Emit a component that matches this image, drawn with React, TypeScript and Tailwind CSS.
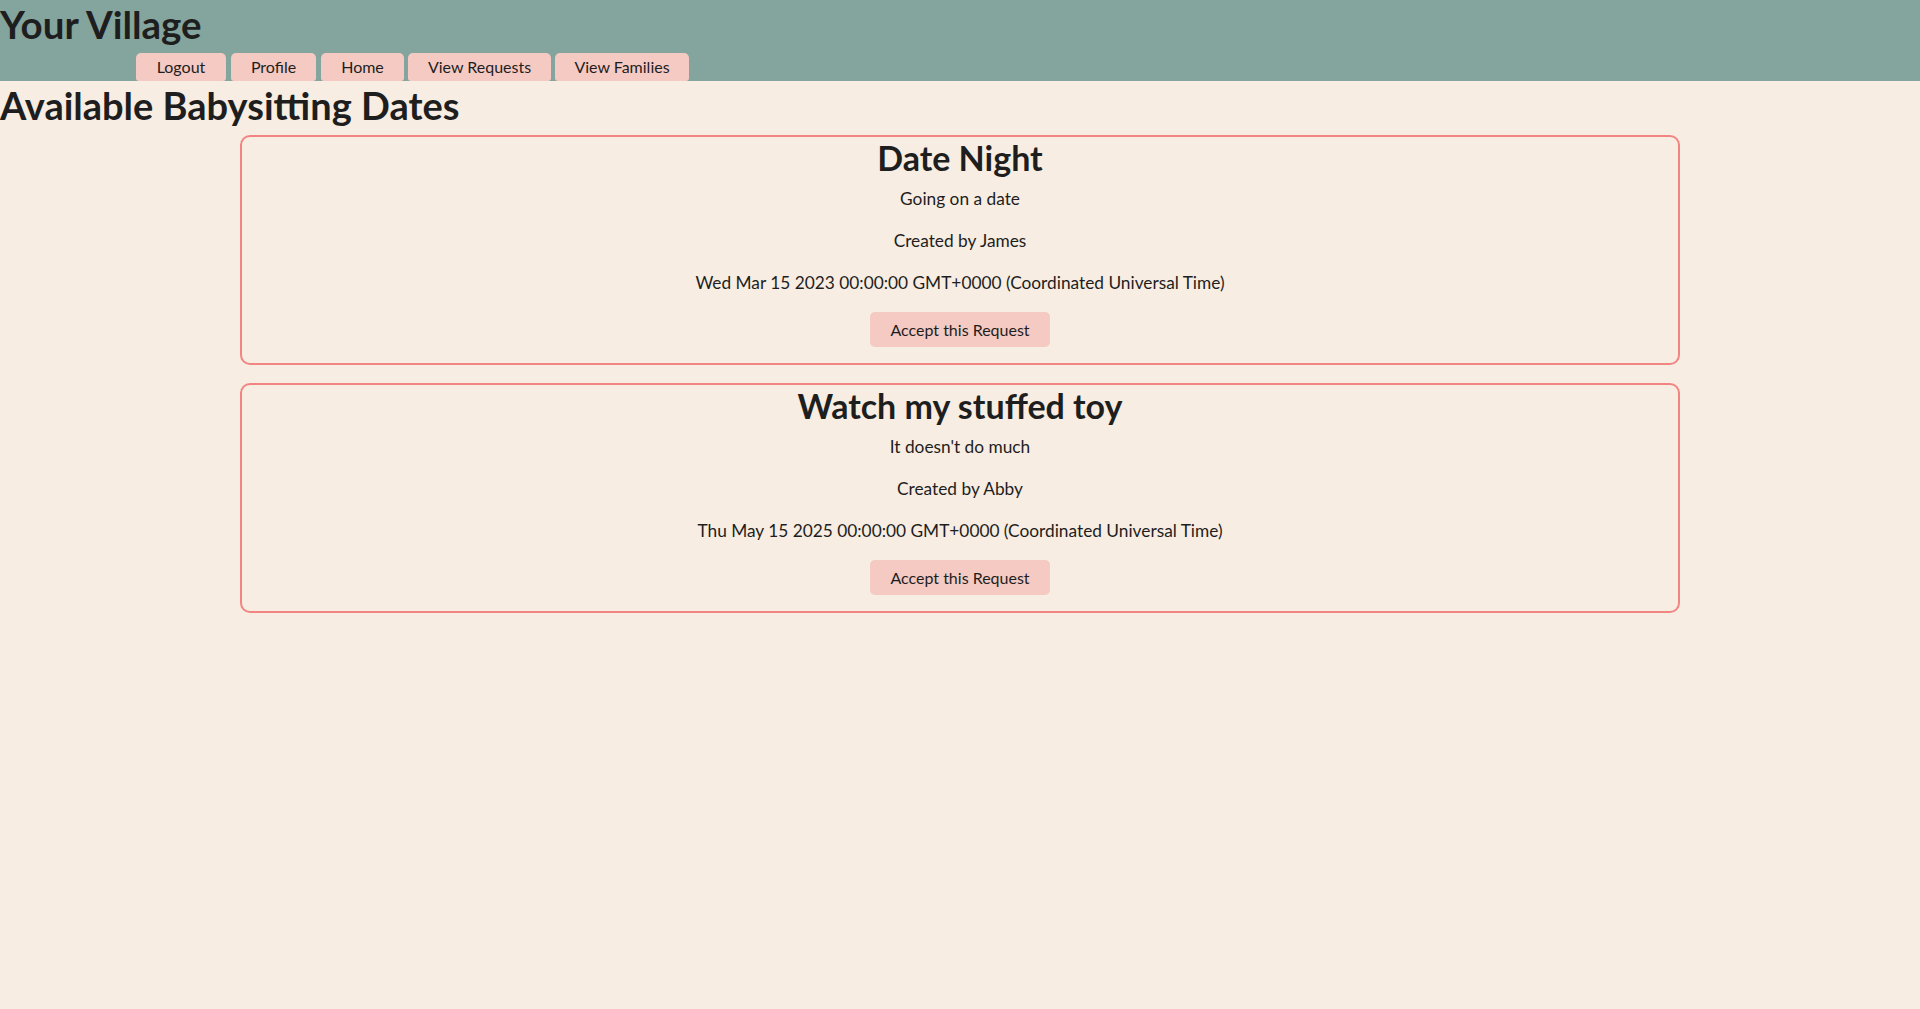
import React from 'react';

const navItems = [
  { label: 'Logout', cls: 'w-[90px]' },
  { label: 'Profile', cls: 'w-[85px] ml-[5px]' },
  { label: 'Home', cls: 'w-[83px] ml-[5px]' },
  { label: 'View Requests', cls: 'w-[143px] ml-[4px]' },
  { label: 'View Families', cls: 'w-[134px] ml-[4px]' },
];

const requests = [
  {
    title: 'Date Night',
    description: 'Going on a date',
    creator: 'James',
    date: 'Wed Mar 15 2023 00:00:00 GMT+0000 (Coordinated Universal Time)',
  },
  {
    title: 'Watch my stuffed toy',
    description: "It doesn't do much",
    creator: 'Abby',
    date: 'Thu May 15 2025 00:00:00 GMT+0000 (Coordinated Universal Time)',
  },
];

const App: React.FC = () => {
  return (
    <div className="min-h-screen bg-[#f7ede2] text-[#1e1e1e] font-['Lato','Open_Sans',sans-serif]">
      <header className="bg-[#84a59d] h-[81px] flex flex-col">
        <h1 className="text-[38.5px] font-bold leading-[48px] h-[53px]">Your Village</h1>
        <nav className="flex pl-[136px] h-[28px]">
          {navItems.map((item) => (
            <button
              key={item.label}
              className={`${item.cls} h-[28px] bg-[#f5cac3] rounded-t-[5px] rounded-b-[3px] text-[16px] leading-[28px] text-center`}
            >
              {item.label}
            </button>
          ))}
        </nav>
      </header>

      <h1 className="text-[38px] font-bold leading-[48px] h-[54px]">Available Babysitting Dates</h1>

      <div className="flex flex-col gap-[18px]">
        {requests.map((req) => (
          <div
            key={req.title}
            className="w-[75%] mx-auto border-2 border-[#f28482] rounded-[10px] flex flex-col items-center text-center pb-[16px]"
          >
            <h2 className="text-[34px] font-bold leading-[41px]">{req.title}</h2>
            <p className="text-[17.3px] leading-[24px] mt-[9px]">{req.description}</p>
            <p className="text-[17.3px] leading-[24px] mt-[18px]">Created by {req.creator}</p>
            <p className="text-[17.3px] leading-[24px] mt-[18px]">{req.date}</p>
            <button className="mt-[17px] w-[180px] h-[35px] bg-[#f5cac3] rounded-[5px] text-[16px]">
              Accept this Request
            </button>
          </div>
        ))}
      </div>
    </div>
  );
};

export default App;
